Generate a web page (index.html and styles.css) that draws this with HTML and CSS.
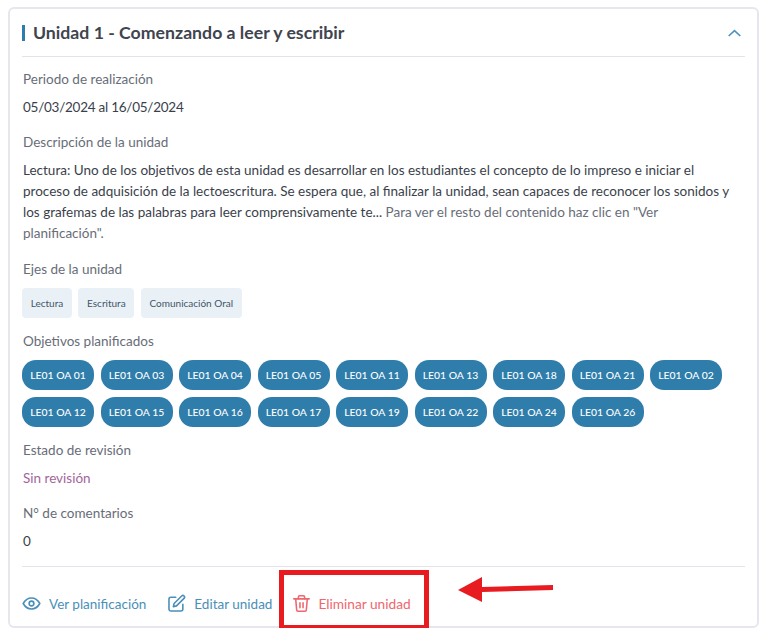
FILE: index.html
```html
<!DOCTYPE html>
<html lang="es">
<head>
    <meta charset="UTF-8">
    <meta name="viewport" content="width=device-width, initial-scale=1.0">
    <title>Unidad 1</title>
    <link rel="stylesheet" href="styles.css">
</head>
<body>
    <div class="card">
        <div class="card-header">
            <h2 class="card-title">Unidad 1 - Comenzando a leer y escribir</h2>
            <svg class="chevron" width="13" height="8" viewBox="0 0 13 8" fill="none" stroke="#4a93bd" stroke-width="1.6"><path d="M.7 7l5.800-5.400L12.300 7"/></svg>
        </div>

        <p class="label first">Periodo de realización</p>
        <p class="value date">05/03/2024 al 16/05/2024</p>

        <p class="label desc-label">Descripción de la unidad</p>
        <p class="desc">Lectura: Uno de los objetivos de esta unidad es desarrollar en los estudiantes el concepto de lo impreso e iniciar el proceso de adquisición de la lectoescritura. Se espera que, al finalizar la unidad, sean capaces de reconocer los sonidos y los grafemas de las palabras para leer comprensivamente te... <span class="muted">Para ver el resto del contenido haz clic en "Ver planificación".</span></p>

        <p class="label ejes-label">Ejes de la unidad</p>
        <div class="chips">
            <span class="chip">Lectura</span>
            <span class="chip">Escritura</span>
            <span class="chip">Comunicación Oral</span>
        </div>

        <p class="label obj-label">Objetivos planificados</p>
        <div class="pills">
            <span class="pill">LE01 OA 01</span>
            <span class="pill">LE01 OA 03</span>
            <span class="pill">LE01 OA 04</span>
            <span class="pill">LE01 OA 05</span>
            <span class="pill">LE01 OA 11</span>
            <span class="pill">LE01 OA 13</span>
            <span class="pill">LE01 OA 18</span>
            <span class="pill">LE01 OA 21</span>
            <span class="pill">LE01 OA 02</span>
            <span class="pill">LE01 OA 12</span>
            <span class="pill">LE01 OA 15</span>
            <span class="pill">LE01 OA 16</span>
            <span class="pill">LE01 OA 17</span>
            <span class="pill">LE01 OA 19</span>
            <span class="pill">LE01 OA 22</span>
            <span class="pill">LE01 OA 24</span>
            <span class="pill">LE01 OA 26</span>
        </div>

        <p class="label estado-label">Estado de revisión</p>
        <p class="value estado">Sin revisión</p>

        <p class="label desc-label">N° de comentarios</p>
        <p class="value">0</p>

        <div class="actions">
            <a class="action">
                <svg width="19" height="19" viewBox="0 0 24 24" fill="none" stroke="#4a8fb8" stroke-width="2" stroke-linecap="round" stroke-linejoin="round"><path d="M1.500 12S5.500 5 12 5s10.500 7 10.500 7-4 7-10.500 7S1.500 12 1.500 12z"/><circle cx="12" cy="12" r="3"/></svg>
                Ver planificación
            </a>
            <a class="action">
                <svg width="19" height="19" viewBox="0 0 24 24" fill="none" stroke="#4a8fb8" stroke-width="2" stroke-linecap="round" stroke-linejoin="round"><path d="M11 4H5a2.500 2.500 0 0 0-2.500 2.500V19A2.500 2.500 0 0 0 5 21.500h12.500A2.500 2.500 0 0 0 20 19v-6"/><path d="M18.500 2.500a2.100 2.100 0 0 1 3 3L12 15l-4 1 1-4 9.500-9.500z"/></svg>
                Editar unidad
            </a>
            <a class="action danger">
                <svg width="17" height="19" viewBox="0 0 22 24" fill="none" stroke="#f0666d" stroke-width="2" stroke-linecap="round" stroke-linejoin="round"><path d="M1 6h20"/><path d="M7 6V3.500A1.500 1.500 0 0 1 8.500 2h5A1.500 1.500 0 0 1 15 3.500V6"/><path d="M3.500 6l1.200 14a2 2 0 0 0 2 2h8.600a2 2 0 0 0 2-2L18.500 6"/><path d="M9 11v6.500M13 11v6.500"/></svg>
                <span class="danger-text">Eliminar unidad</span>
            </a>
        </div>

        <!-- marca roja de la captura -->
        <div class="mark-box"></div>
        <svg class="mark-arrow" width="98" height="30" viewBox="0 0 98 30"><path d="M1 15L25 2v10l71-2v5l-71 2v10z" fill="#e81c20"/></svg>
    </div>
</body>
</html>
```

FILE: styles.css
```css
* { box-sizing: border-box; }

body {
    margin: 0;
    font-family: "Lato", "Open Sans", sans-serif;
    font-size: 13.500px;
    color: #3a3f4b;
    background: #fff;
}

p { margin: 0; padding-left: 1px; }

.card {
    position: relative;
    width: 751px;
    height: 621px;
    margin: 7px 0 0 8px;
    padding: 0 12px;
    border: 2px solid #e6e6ee;
    border-radius: 6px;
}

.card-header {
    display: flex;
    align-items: center;
    justify-content: space-between;
    height: 48px;
    padding-right: 4px;
    border-bottom: 1px solid #e3e3ea;
}

.card-title {
    margin: 0;
    padding-left: 8px;
    border-left: 3px solid #2e7dab;
    font-size: 17.700px;
    font-weight: 700;
    line-height: 16px;
    color: #3f444f;
}

.label { color: #686d78; line-height: 20px; }
.value { line-height: 20px; margin-top: 8px; }
.date { letter-spacing: -0.250px; }

.first { margin-top: 12px; }
.desc-label { margin-top: 15px; }
.ejes-label { margin-top: 14.500px; }
.obj-label { margin-top: 13px; }
.estado-label { margin-top: 13px; }

.desc { max-width: 716px; margin-top: 7.500px; line-height: 21.300px; }
.muted { color: #686d78; }
.estado { color: #a2659a; }

.chips { display: flex; gap: 6.500px; margin-top: 9px; }

.chip {
    padding: 0 8.700px;
    height: 30px;
    line-height: 30px;
    font-size: 10px;
    color: #3f5566;
    background: #e9f1f7;
    border-radius: 4px;
}

.pills { display: flex; flex-wrap: wrap; gap: 7px 6.500px; margin-top: 9px; }

.pill {
    width: 72px;
    height: 30px;
    line-height: 30px;
    text-align: center;
    font-size: 10.400px;
    font-weight: 500;
    color: #fff;
    background: #2e7dab;
    border-radius: 14px;
}

.actions {
    display: flex;
    align-items: center;
    gap: 21px;
    margin-top: 15px;
    padding-top: 27px;
    border-top: 1px solid #e3e3ea;
}

.action {
    display: flex;
    align-items: center;
    gap: 8px;
    color: #4a8fb8;
}

.danger { color: #f0666d; }
.danger-text { font-size: 13.700px; }

.mark-box {
    position: absolute;
    left: 269px;
    top: 561px;
    width: 150px;
    height: 60px;
    border: 5px solid #e81c20;
}

.mark-arrow {
    position: absolute;
    left: 447px;
    top: 566px;
}
```
